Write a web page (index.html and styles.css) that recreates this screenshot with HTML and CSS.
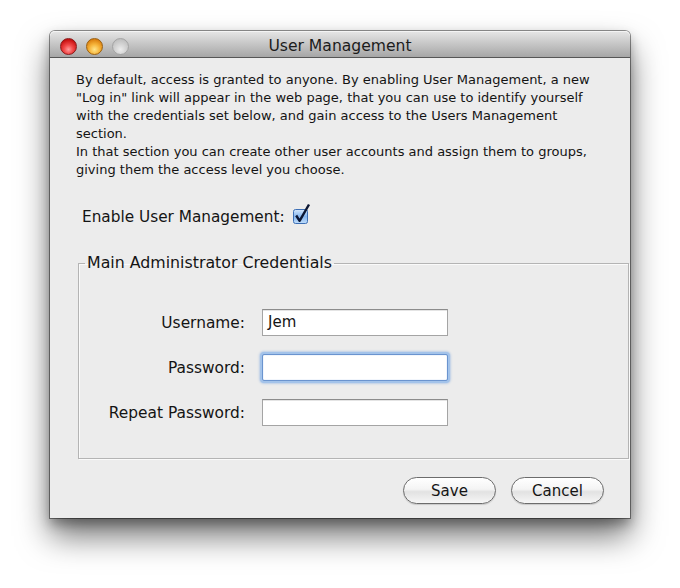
FILE: index.html
```html
<!DOCTYPE html>
<html>
<head>
<meta charset="utf-8">
<link rel="stylesheet" href="styles.css">
</head>
<body>
<div class="window">
  <div class="titlebar">
    <div class="lights">
      <span class="light red"></span>
      <span class="light yellow"></span>
      <span class="light gray"></span>
    </div>
    <div class="title">User Management</div>
    <div></div>
  </div>
  <div class="content">
    <p class="intro">By default, access is granted to anyone. By enabling User Management, a new<br>"Log in" link will appear in the web page, that you can use to identify yourself<br>with the credentials set below, and gain access to the Users Management<br>section.<br>In that section you can create other user accounts and assign them to groups,<br>giving them the access level you choose.</p>
    <div class="enable">
      <span>Enable User Management:</span>
      <svg class="check" width="20" height="22" viewBox="0 0 20 22">
        <defs>
          <linearGradient id="cb" x1="0" y1="0" x2="0" y2="1">
            <stop offset="0" stop-color="#d6e8fc"/>
            <stop offset="0.5" stop-color="#86b6ee"/>
            <stop offset="1" stop-color="#c0ddfb"/>
          </linearGradient>
        </defs>
        <rect x="0.5" y="6.5" width="14" height="14" rx="2" fill="url(#cb)" stroke="#3d6fb5"/>
        <path d="M3.2 12.5 L6.6 17.8 L16 1.5" fill="none" stroke="#0b1633" stroke-width="2.4" stroke-linejoin="round"/>
      </svg>
    </div>
    <fieldset class="creds">
      <legend>Main Administrator Credentials</legend>
      <div class="form">
        <label>Username:</label>
        <div class="field">Jem</div>
        <label>Password:</label>
        <div class="field focused"></div>
        <label>Repeat Password:</label>
        <div class="field"></div>
      </div>
    </fieldset>
    <div class="buttons">
      <button class="btn">Save</button>
      <button class="btn">Cancel</button>
    </div>
  </div>
</div>
</body>
</html>
```

FILE: styles.css
```css
html, body {
  margin: 0;
  padding: 0;
  background: #ffffff;
}
body {
  min-height: 588px;
  overflow: hidden;
  font-family: "DejaVu Sans", "Liberation Sans", sans-serif;
  color: #141414;
}
.window {
  margin: 31px 0 0 50px;
  width: 580px;
  height: 487px;
  box-sizing: border-box;
  background: #ececec;
  border-radius: 5px 5px 0 0;
  box-shadow: 0 0 0 1px rgba(0,0,0,0.42), 0 18px 32px rgba(0,0,0,0.55), 0 6px 12px rgba(0,0,0,0.3);
  display: flex;
  flex-direction: column;
}
.titlebar {
  height: 26px;
  border-bottom: 1px solid #565656;
  border-radius: 5px 5px 0 0;
  background: linear-gradient(#e6e6e6, #c6c6c6 50%, #a6a6a6);
  box-shadow: inset 0 1px 0 #f4f4f4;
  display: grid;
  grid-template-columns: 1fr auto 1fr;
  align-items: center;
}
.lights {
  display: flex;
  gap: 9px;
  padding-left: 10px;
  padding-top: 4px;
}
.light {
  width: 17px;
  height: 17px;
  border-radius: 50%;
  box-sizing: border-box;
}
.red {
  background: radial-gradient(circle at 50% 70%, #ff9c9c 0, #f24a4a 35%, #c81010 75%, #a80808 100%);
  border: 1px solid #8a1a1a;
}
.yellow {
  background: radial-gradient(circle at 50% 70%, #ffe58a 0, #f6b43a 40%, #d97c0c 80%, #c26a08 100%);
  border: 1px solid #9a6010;
}
.gray {
  background: radial-gradient(circle at 50% 70%, #ececec 0, #d2d2d2 45%, #b4b4b4 100%);
  border: 1px solid #a4a4a4;
}
.title {
  font-size: 15.6px;
  color: #1c1c1c;
  padding-top: 3px;
}
.content {
  flex: 1;
  display: flex;
  flex-direction: column;
}
.intro {
  margin: 13px 0 0 26px;
  font-size: 13px;
  line-height: 18px;
  white-space: nowrap;
}
.enable {
  margin: 26px 0 0 32px;
  height: 22px;
  display: flex;
  align-items: flex-end;
  gap: 8px;
  font-size: 15.3px;
}
.enable span {
  line-height: 18px;
  padding-bottom: 1px;
}
.check {
  display: block;
  margin-bottom: 2px;
}
.creds {
  margin: 27px 1px 0 28px;
  padding: 0 0 32px 0;
  border: 1px solid #b4b4b4;
  box-shadow: 1px 1px 0 #fafafa, inset 1px 1px 0 #fafafa;
  min-width: 0;
}
.creds legend {
  margin-left: 6px;
  padding: 0 2px;
  font-size: 15.8px;
  line-height: 18px;
}
.form {
  display: grid;
  grid-template-columns: 166px 186px;
  column-gap: 17px;
  row-gap: 18px;
  align-items: center;
  padding-top: 37px;
}
.form label {
  text-align: right;
  font-size: 15.4px;
  line-height: 18px;
}
.field {
  height: 27px;
  box-sizing: border-box;
  background: #fff;
  border: 1px solid #a4a4a4;
  border-top-color: #8c8c8c;
  box-shadow: inset 0 1px 0 #e4e4e4;
  font-size: 15px;
  line-height: 25px;
  padding-left: 5px;
}
.field.focused {
  border: 1px solid #6a94cf;
  box-shadow: 0 0 0 2px #a3c3ea, 0 0 2px 3px rgba(130,170,225,0.45), inset 0 0 1px #7ea6dc;
  border-radius: 2px;
}
.buttons {
  display: flex;
  justify-content: flex-end;
  gap: 15px;
  margin: 18px 26px 0 0;
}
.btn {
  width: 93px;
  height: 27px;
  border-radius: 14px;
  border: 1px solid #6c6c6c;
  background: linear-gradient(#ffffff, #f4f4f4 45%, #e2e2e2 55%, #f6f6f6);
  box-shadow: 0 1px 1px rgba(0,0,0,0.15);
  font-family: "DejaVu Sans", "Liberation Sans", sans-serif;
  font-size: 15px;
  color: #141414;
  padding: 0;
}
```
